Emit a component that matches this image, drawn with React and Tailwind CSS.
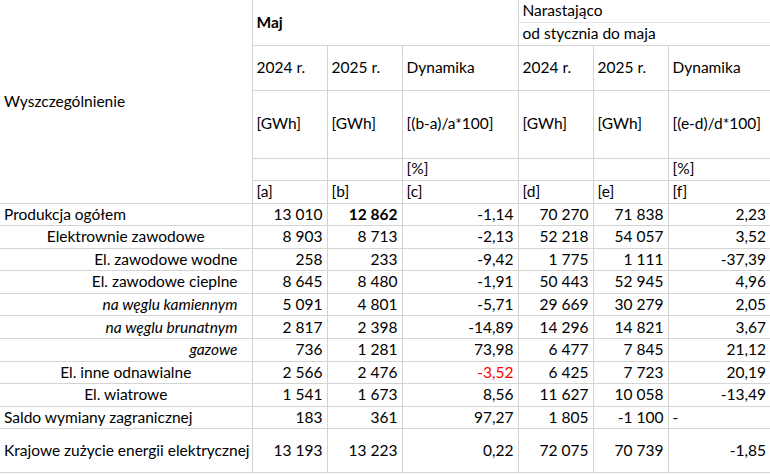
const rows = [
  ["Produkcja ogółem", "left", false, ["13 010", "12 862", "-1,14", "70 270", "71 838", "2,23"]],
  ["Elektrownie zawodowe", "center", false, ["8 903", "8 713", "-2,13", "52 218", "54 057", "3,52"]],
  ["El. zawodowe wodne", "right", false, ["258", "233", "-9,42", "1 775", "1 111", "-37,39"]],
  ["El. zawodowe cieplne", "right", false, ["8 645", "8 480", "-1,91", "50 443", "52 945", "4,96"]],
  ["na węglu kamiennym", "right", true, ["5 091", "4 801", "-5,71", "29 669", "30 279", "2,05"]],
  ["na węglu brunatnym", "right", true, ["2 817", "2 398", "-14,89", "14 296", "14 821", "3,67"]],
  ["gazowe", "right", true, ["736", "1 281", "73,98", "6 477", "7 845", "21,12"]],
  ["El. inne odnawialne", "center", false, ["2 566", "2 476", "-3,52", "6 425", "7 723", "20,19"]],
  ["El. wiatrowe", "center", false, ["1 541", "1 673", "8,56", "11 627", "10 058", "-13,49"]],
  ["Saldo wymiany zagranicznej", "left", false, ["183", "361", "97,27", "1 805", "-1 100", "-"]],
];

const B = "border border-[#d4d4d4]";

export default function App() {
  return (
    <div className="w-[770px] h-[474px] bg-white overflow-hidden text-black text-[15.5px] leading-none" style={{ fontFamily: "Lato, 'Open Sans', sans-serif" }}>
      <table className="border-collapse table-fixed w-[770px]">
        <colgroup>
          <col className="w-[252px]" />
          <col className="w-[75px]" />
          <col className="w-[75px]" />
          <col className="w-[116px]" />
          <col className="w-[75px]" />
          <col className="w-[75px]" />
          <col className="w-[102px]" />
        </colgroup>
        <tbody>
          <tr className="h-[22px]">
            <td rowSpan={6} className="border-r border-b border-[#d4d4d4] px-[4px] align-middle">Wyszczególnienie</td>
            <td colSpan={3} rowSpan={2} className="border-r border-b border-[#d4d4d4] px-[4px] font-bold align-middle">Maj</td>
            <td colSpan={3} className="border-b border-[#e4e4e4] px-[4px]">Narastająco</td>
          </tr>
          <tr className="h-[23px]">
            <td colSpan={3} className="border-b border-[#d4d4d4] px-[4px]">od stycznia do maja</td>
          </tr>
          <tr className="h-[45px]">
            {["2024 r.", "2025 r.", "Dynamika", "2024 r.", "2025 r.", "Dynamika"].map((t, i) => (
              <td key={i} className={`${B} border-t-0 px-[4px] last:border-r-0`}>{t}</td>
            ))}
          </tr>
          <tr className="h-[68px]">
            {["[GWh]", "[GWh]", "[(b-a)/a*100]", "[GWh]", "[GWh]", "[(e-d)/d*100]"].map((t, i) => (
              <td key={i} className={`${B} px-[4px] last:border-r-0 whitespace-nowrap`}>{t}</td>
            ))}
          </tr>
          <tr className="h-[22px]">
            {["", "", "[%]", "", "", "[%]"].map((t, i) => (
              <td key={i} className={`${B} px-[4px] last:border-r-0`}>{t}</td>
            ))}
          </tr>
          <tr className="h-[23px]">
            {["[a]", "[b]", "[c]", "[d]", "[e]", "[f]"].map((t, i) => (
              <td key={i} className={`${B} px-[4px] last:border-r-0`}>{t}</td>
            ))}
          </tr>
          {rows.map(([label, align, italic, vals], r) => (
            <tr key={r} className="h-[22.6px]">
              <td className={`border-b border-r border-[#d4d4d4] px-[4px] whitespace-nowrap ${align === "left" ? "text-left" : align === "center" ? "text-center" : "text-right pr-[14px]"} ${italic ? "italic" : ""}`}>{label}</td>
              {vals.map((v, i) => (
                <td key={i} className={`${B} px-[4px] last:border-r-0 ${v === "-" ? "text-left" : "text-right"} ${r === 0 && i === 1 ? "font-bold" : ""} ${r === 7 && i === 2 ? "text-[#ff0000]" : ""}`}>{v}</td>
              ))}
            </tr>
          ))}
          <tr className="h-[44px]">
            <td className="border-b border-r border-[#d4d4d4] px-[4px] whitespace-nowrap">Krajowe zużycie energii elektrycznej</td>
            {["13 193", "13 223", "0,22", "72 075", "70 739", "-1,85"].map((v, i) => (
              <td key={i} className={`${B} px-[4px] text-right last:border-r-0`}>{v}</td>
            ))}
          </tr>
        </tbody>
      </table>
    </div>
  );
}
